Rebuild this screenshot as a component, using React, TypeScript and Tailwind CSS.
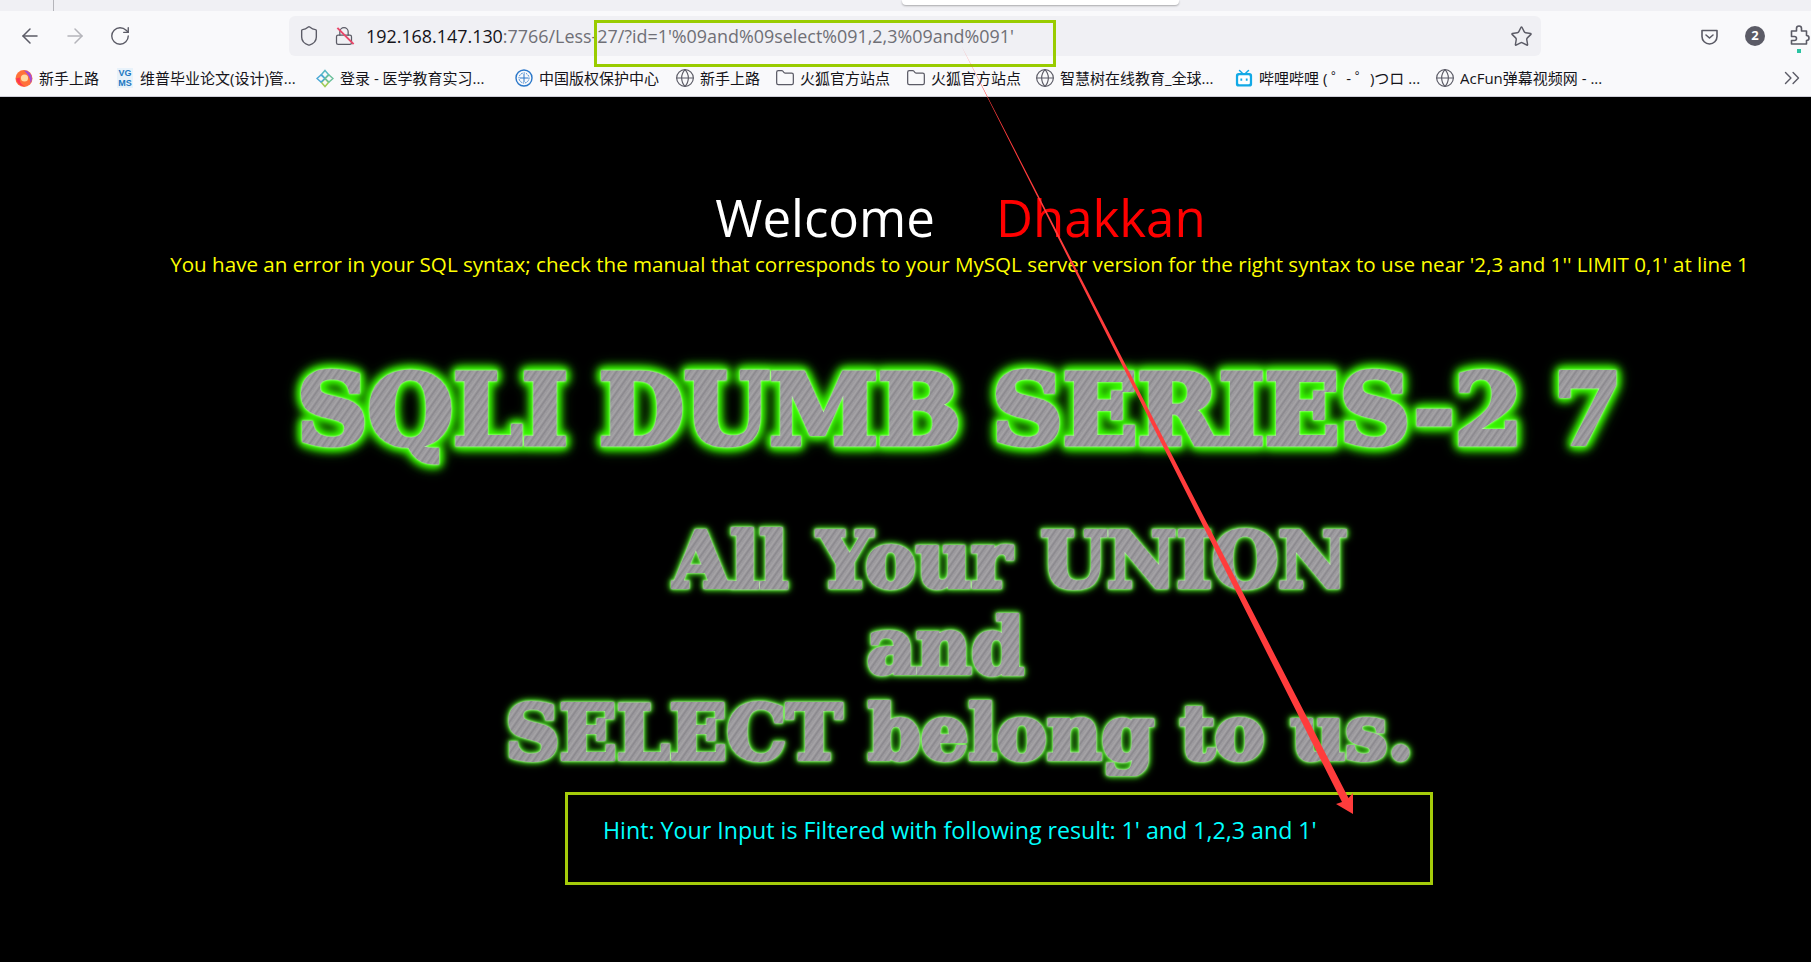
import { ArrowLeft, ArrowRight, ChevronsRight, Folder, Globe, Lock, RotateCw, Shield, Star } from 'lucide-react';
import type { ReactNode } from 'react';

const CJK = "font-['Open_Sans','Noto_Sans_CJK_SC',sans-serif]";

function FirefoxIcon() {
  return (
    <svg width="19" height="19" viewBox="0 0 18 18">
      <circle cx="9" cy="9" r="8.5" fill="#ff7139" />
      <path d="M9 1a8 8 0 0 1 8 8c0 2-1 4-2 5 1-4-1-8-6-13z" fill="#a24dd6" />
      <circle cx="9.5" cy="8.5" r="3.6" fill="#ffd9a0" />
      <path d="M1 9c1 5 5 8 10 8-4-1-7-4-6-9z" fill="#ff3750" />
    </svg>
  );
}

function VgmsIcon() {
  return (
    <span className="flex h-[20px] w-[16px] flex-col items-center justify-center bg-[#e8f2fa] text-[9px] leading-[10px] font-bold text-[#1a78c2] font-['Liberation_Sans',sans-serif]">
      <span>VG</span>
      <span>MS</span>
    </span>
  );
}

function LeafIcon() {
  return (
    <svg width="19" height="19" viewBox="0 0 18 18" fill="none" strokeWidth="1.5">
      <path d="M9 1l3.5 4L9 9 5.500 5z" stroke="#58b9c4" />
      <path d="M9 9l3.5 4L9 17l-3.500-4z" stroke="#9fcb55" />
      <path d="M1 9l4-3.500L9 9l-4 3.500z" stroke="#4ba9d6" />
      <path d="M9 9l4-3.500L17 9l-4 3.500z" stroke="#6cc09b" />
    </svg>
  );
}

function SealIcon() {
  return (
    <svg width="20" height="20" viewBox="0 0 18 18" fill="none" stroke="#2a77c9">
      <circle cx="9" cy="9" r="8" strokeWidth="1.4" />
      <circle cx="9" cy="9" r="5" strokeWidth="1" strokeDasharray="1.500 1" />
      <path d="M5 9h8M9 5v8" strokeWidth="1" />
    </svg>
  );
}

function BiliIcon() {
  return (
    <svg width="21" height="21" viewBox="0 0 20 20">
      <path d="M5 1l3 3M15 1l-3 3" stroke="#12a9e6" strokeWidth="1.600" strokeLinecap="round" />
      <rect x="1" y="4" width="18" height="15" rx="3" fill="#12a9e6" />
      <rect x="3.500" y="6.500" width="13" height="10" rx="1.500" fill="#fff" />
      <rect x="6" y="10" width="2" height="2.500" fill="#12a9e6" />
      <rect x="12" y="10" width="2" height="2.500" fill="#12a9e6" />
    </svg>
  );
}

function PocketIcon() {
  return (
    <svg width="19" height="19" viewBox="0 0 19 19" fill="none" stroke="#5b5b66" strokeWidth="1.600">
      <path d="M2 3.500h15v6a7.500 7.500 0 0 1-15 0z" strokeLinejoin="round" />
      <path d="M6 8l3.500 3L13 8" strokeLinecap="round" strokeLinejoin="round" />
    </svg>
  );
}

function ExtensionIcon() {
  return (
    <svg width="21" height="22" viewBox="0 0 21 22" fill="none" stroke="#5b5b66" strokeWidth="1.600" strokeLinejoin="round">
      <path d="M1.500 7h5V4.500a2.500 2.500 0 0 1 5 0V7h5v4.500a2.500 2.500 0 0 1 0 5V20H1.500v-3.500h3a2 2 0 0 0 0-4h-3z" />
    </svg>
  );
}

function Bookmark({ icon, label, width }: { icon: ReactNode; label: string; width: string }) {
  return (
    <div className={`flex shrink-0 items-center gap-[6px] ${width}`}>
      <span className="flex w-[18px] shrink-0 justify-center">{icon}</span>
      <span className="truncate whitespace-nowrap">{label}</span>
    </div>
  );
}

const globe = <Globe className="h-[20px] w-[20px] shrink-0 text-[#5b5b66]" strokeWidth={1.4} />;
const folder = <Folder className="h-[20px] w-[20px] shrink-0 text-[#5b5b66]" strokeWidth={1.5} />;

export default function App() {
  return (
    <div className={`relative h-[962px] w-[1811px] overflow-hidden bg-black ${CJK}`}>
      {/* tab strip */}
      <div className="relative h-[11px] bg-[#f0f0f4]">
        <div className="absolute top-0 left-[53px] h-[11px] w-px bg-[#b5b5ba]" />
        <div className="absolute top-0 left-[902px] h-[5px] w-[277px] rounded-b bg-white shadow-[0_1px_2px_rgba(0,0,0,0.3)]" />
      </div>

      {/* toolbar */}
      <div className="flex h-[45px] items-start bg-[#f9f9fb] pt-[5px] text-[#5b5b66]">
        <div className="flex h-[40px] w-[289px] shrink-0 items-center pl-[18px]">
          <ArrowLeft size={24} strokeWidth={1.5} />
          <ArrowRight size={24} strokeWidth={1.5} className="ml-[21px] text-[#b4b4ba]" />
          <RotateCw size={22} strokeWidth={1.5} className="ml-[22px]" />
        </div>
        <div className="flex h-[40px] w-[1252px] shrink-0 items-center rounded-md bg-[#f0f0f4] pl-[9px] pr-[8px]">
          <Shield size={22} strokeWidth={1.5} />
          <span className="relative ml-[14px] flex w-[20px] justify-center">
            <Lock size={20} strokeWidth={1.5} />
            <span className="absolute top-[9px] left-0 h-[2px] w-[23px] rotate-45 bg-[#e8476a]" />
          </span>
          <span className="ml-[12px] whitespace-nowrap text-[17.9px] text-[#6f6f76] font-['Open_Sans',sans-serif]">
            <span className="text-[#15141a]">192.168.147.130</span>:7766/Less-27/?id=1'%09and%09select%091,2,3%09and%091'
          </span>
          <Star size={23} strokeWidth={1.5} className="ml-auto" />
        </div>
        <div className="flex h-[40px] flex-1 items-center pl-[159px]">
          <PocketIcon />
          <span className="ml-[26px] flex h-[20px] w-[20px] items-center justify-center rounded-full bg-[#5b5b66] text-[13px] font-bold text-white">
            2
          </span>
          <span className="relative ml-[25px] mt-[-2px] shrink-0">
            <ExtensionIcon />
            <span className="absolute top-[25px] left-[7px] h-[4px] w-[4px] bg-[#2ac3a2]" />
          </span>
        </div>
      </div>

      {/* bookmarks */}
      <div className="flex h-[41px] items-center whitespace-nowrap border-b border-[#cfcfd8] bg-[#f9f9fb] pl-[15px] pr-[6px] pt-[4px] text-[15px] text-[#15141a]">
        <Bookmark icon={<FirefoxIcon />} label="新手上路" width="w-[101px]" />
        <Bookmark icon={<VgmsIcon />} label="维普毕业论文(设计)管..." width="w-[200px]" />
        <Bookmark icon={<LeafIcon />} label="登录 - 医学教育实习..." width="w-[199px]" />
        <Bookmark icon={<SealIcon />} label="中国版权保护中心" width="w-[161px]" />
        <Bookmark icon={globe} label="新手上路" width="w-[100px]" />
        <Bookmark icon={folder} label="火狐官方站点" width="w-[131px]" />
        <Bookmark icon={folder} label="火狐官方站点" width="w-[129px]" />
        <Bookmark icon={globe} label="智慧树在线教育_全球..." width="w-[199px]" />
        <Bookmark icon={<BiliIcon />} label="哔哩哔哩 ( ゜- ゜)つロ ..." width="w-[201px]" />
        <Bookmark icon={globe} label="AcFun弹幕视频网 - ..." width="w-[170px]" />
        <ChevronsRight size={26} strokeWidth={1.3} className="ml-auto text-[#5b5b66]" />
      </div>

      {/* page */}
      <main className="flex flex-col items-center pl-[108px] pt-[89px] font-['Open_Sans',sans-serif]">
        <div className="flex h-[62px] items-center gap-[61px] pl-[2px] text-[51px] leading-none">
          <span className="text-white">Welcome</span>
          <span className="text-[#ff0000]">Dhakkan</span>
        </div>
        <p className="h-[32px] whitespace-nowrap text-[20.6px] leading-[32px] text-[#ffff00]">
          You have an error in your SQL syntax; check the manual that corresponds to your MySQL server version for the right syntax to use near '2,3 and 1'' LIMIT 0,1' at line 1
        </p>
        <h1 className="mt-[70px] h-[120px] whitespace-nowrap bg-[repeating-linear-gradient(125deg,#9a989c_0px,#a6a4a7_2px,#8a888d_4px,#a09ea2_6px)] bg-clip-text text-[98px] leading-[120px] font-bold [word-spacing:-3px] text-transparent [-webkit-text-stroke:5px_transparent] [filter:drop-shadow(0_0_1px_#e8ffe0)_drop-shadow(0_0_3px_#3cff00)_drop-shadow(0_0_4px_#3cff00)_drop-shadow(0_0_4px_#2ee600)] font-['DejaVu_Serif',serif]">
          SQLI DUMB SERIES-2 7
        </h1>
        <div className="mt-[48px] flex flex-col items-center text-[76px] leading-[86px] font-bold font-['DejaVu_Serif',serif]">
          <span className="ml-[100px] whitespace-nowrap bg-[repeating-linear-gradient(125deg,#9a989c_0px,#a6a4a7_2px,#8a888d_4px,#a09ea2_6px)] bg-clip-text [word-spacing:3px] text-transparent [-webkit-text-stroke:4px_transparent] [filter:drop-shadow(0_0_1px_#e8ffe0)_drop-shadow(0_0_2px_#46dc1e)_drop-shadow(0_0_3px_#3ccc18)]">
            All Your UNION
          </span>
          <span className="ml-[-28px] whitespace-nowrap bg-[repeating-linear-gradient(125deg,#9a989c_0px,#a6a4a7_2px,#8a888d_4px,#a09ea2_6px)] bg-clip-text text-transparent [-webkit-text-stroke:4px_transparent] [filter:drop-shadow(0_0_1px_#e8ffe0)_drop-shadow(0_0_2px_#46dc1e)_drop-shadow(0_0_3px_#3ccc18)]">
            and
          </span>
          <span className="whitespace-nowrap bg-[repeating-linear-gradient(125deg,#9a989c_0px,#a6a4a7_2px,#8a888d_4px,#a09ea2_6px)] bg-clip-text text-[75px] text-transparent [-webkit-text-stroke:4px_transparent] [filter:drop-shadow(0_0_1px_#e8ffe0)_drop-shadow(0_0_2px_#46dc1e)_drop-shadow(0_0_3px_#3ccc18)]">
            SELECT belong to us.
          </span>
        </div>
      </main>

      <div className="absolute top-[792px] left-[565px] h-[93px] w-[868px] border-[3px] border-[#a5cc0a] pl-[35px] pt-[19px] text-[23.2px] leading-[32px] text-[#00ffff] font-['Open_Sans',sans-serif]">
        Hint: Your Input is Filtered with following result: 1' and 1,2,3 and 1'
      </div>

      {/* screenshot annotations */}
      <div className="absolute top-[20px] left-[594px] h-[47px] w-[462px] border-[3px] border-[#99cc00]" />
      <svg className="absolute top-0 left-0" width="1811" height="962" fill="none">
        <polygon points="961,45 1342,802 1336,804 1353,814 1353,793 1348.500,798" fill="#ff3c3c" />
      </svg>
    </div>
  );
}
